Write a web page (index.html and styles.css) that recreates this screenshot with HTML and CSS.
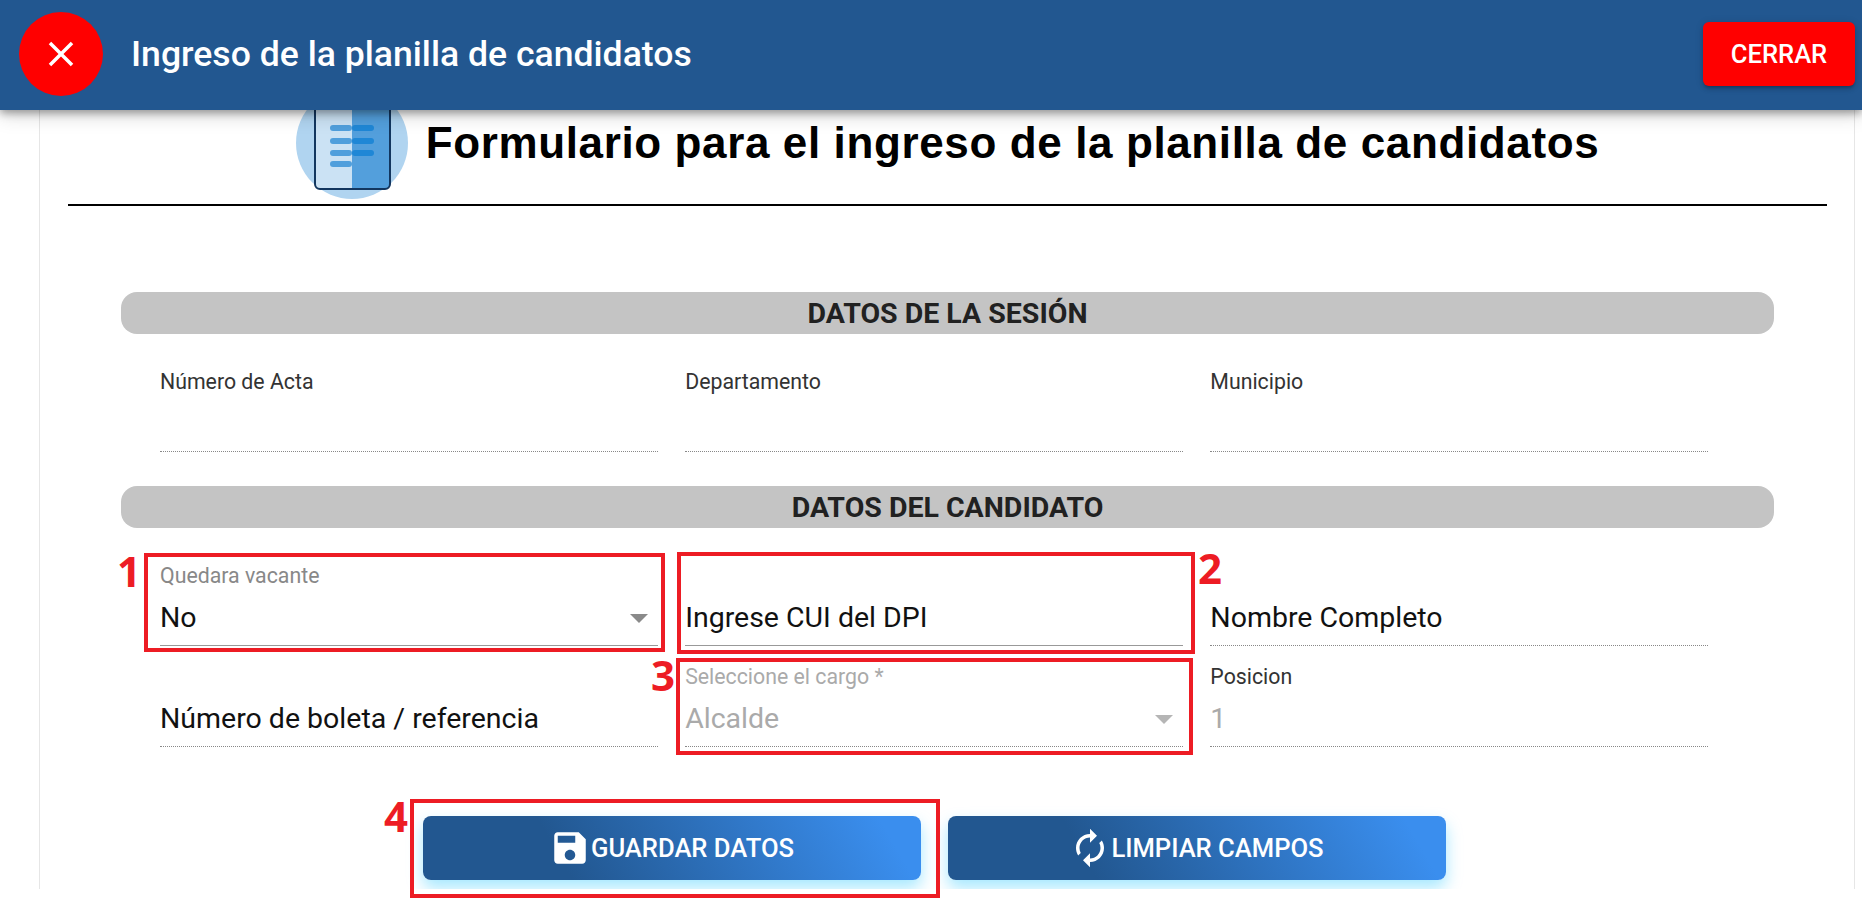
FILE: index.html
```html
<!DOCTYPE html>
<html lang="es">
<head>
    <meta charset="UTF-8">
    <meta name="viewport" content="width=device-width, initial-scale=1.0">
    <title>Ingreso de la planilla de candidatos</title>
    <link rel="stylesheet" href="styles.css">
</head>
<body>
    <header class="top-bar">
        <button class="close-round">
            <svg class="icon-42" viewBox="0 0 24 24"><path d="M19 6.41L17.59 5 12 10.59 6.41 5 5 6.41 10.59 12 5 17.59 6.41 19 12 13.41 17.59 19 19 17.59 13.41 12z"/></svg>
        </button>
        <div class="top-title">Ingreso de la planilla de candidatos</div>
        <button class="close-btn">CERRAR</button>
    </header>

    <div class="dialog-body">
        <div class="sheet">
            <div class="form-title">
                <svg class="form-icon" viewBox="0 0 112 112">
                    <circle cx="56" cy="56" r="56" fill="#b0d4f0"/>
                    <path d="M19 -10H56V102H24a5 5 0 0 1-5-5z" fill="#cbe2f4"/>
                    <path d="M56 -10H94V97a5 5 0 0 1-5 5H56z" fill="#539fdc"/>
                    <path d="M19 -10V97a5 5 0 0 0 5 5H89a5 5 0 0 0 5-5V-10" fill="none" stroke="#12365f" stroke-width="2"/>
                    <g fill="#509fdc">
                        <rect x="34" y="38" width="22" height="6" rx="3"/>
                        <rect x="34" y="51" width="22" height="6" rx="3"/>
                        <rect x="34" y="63" width="22" height="6" rx="3"/>
                        <rect x="34" y="74" width="22" height="6" rx="3"/>
                    </g>
                    <g fill="#1f87d6">
                        <rect x="56" y="38" width="22" height="6" rx="3"/>
                        <rect x="56" y="51" width="22" height="6" rx="3"/>
                        <rect x="56" y="63" width="22" height="6" rx="3"/>
                    </g>
                </svg>
                <h1>Formulario para el ingreso de la planilla de candidatos</h1>
            </div>

            <div class="section-bar first">DATOS DE LA SESIÓN</div>
            <div class="field-grid">
                <div class="field dotted">
                    <label>Número de Acta</label>
                    <div class="field-value"></div>
                </div>
                <div class="field dotted">
                    <label>Departamento</label>
                    <div class="field-value"></div>
                </div>
                <div class="field dotted">
                    <label>Municipio</label>
                    <div class="field-value"></div>
                </div>
            </div>

            <div class="section-bar">DATOS DEL CANDIDATO</div>
            <div class="field-grid">
                <div class="field">
                    <label class="muted">Quedara vacante</label>
                    <div class="field-value">No<span class="arrow"></span></div>
                </div>
                <div class="field">
                    <label></label>
                    <div class="field-value">Ingrese CUI del DPI</div>
                </div>
                <div class="field dotted">
                    <label></label>
                    <div class="field-value">Nombre Completo</div>
                </div>
                <div class="field dotted">
                    <label></label>
                    <div class="field-value">Número de boleta / referencia</div>
                </div>
                <div class="field dotted disabled">
                    <label>Seleccione el cargo *</label>
                    <div class="field-value">Alcalde<span class="arrow"></span></div>
                </div>
                <div class="field dotted">
                    <label>Posicion</label>
                    <div class="field-value off">1</div>
                </div>
            </div>

            <div class="actions">
                <button class="grad-btn">
                    <svg class="icon-42" viewBox="0 0 24 24"><path d="M17 3H5c-1.11 0-2 .9-2 2v14c0 1.1.89 2 2 2h14c1.1 0 2-.9 2-2V7l-4-4zm-5 16c-1.66 0-3-1.34-3-3s1.34-3 3-3 3 1.34 3 3-1.34 3-3 3zm3-10H5V5h10v4z"/></svg>
                    GUARDAR DATOS
                </button>
                <button class="grad-btn">
                    <svg class="icon-42" viewBox="0 0 24 24"><path d="M12 6v3l4-4-4-4v3c-4.42 0-8 3.58-8 8 0 1.57.46 3.03 1.24 4.26L6.7 14.8c-.45-.83-.7-1.79-.7-2.8 0-3.31 2.69-6 6-6zm6.76 1.74L17.3 9.2c.44.84.7 1.79.7 2.8 0 3.31-2.69 6-6 6v-3l-4 4 4 4v-3c4.42 0 8-3.58 8-8 0-1.57-.46-3.03-1.24-4.26z"/></svg>
                    LIMPIAR CAMPOS
                </button>
            </div>
        </div>
    </div>

    <!-- annotations drawn on top of the screenshot -->
    <div class="mark box-1"></div>
    <div class="mark box-2"></div>
    <div class="mark box-3"></div>
    <div class="mark box-4"></div>
    <div class="mark-num num-1">1</div>
    <div class="mark-num num-2">2</div>
    <div class="mark-num num-3">3</div>
    <div class="mark-num num-4">4</div>
</body>
</html>
```

FILE: styles.css
```css
body {
    margin: 0;
    height: 912px;
    overflow: hidden;
    position: relative;
    background: #fff;
    font-family: Roboto, sans-serif;
}
button {
    font-family: Roboto, sans-serif;
    border: none;
    cursor: pointer;
}
.icon-42 {
    width: 42px;
    height: 42px;
    flex: none;
    fill: #fff;
}
.top-bar {
    height: 110px;
    box-sizing: border-box;
    padding-bottom: 2px;
    background: #225790;
    display: flex;
    align-items: center;
    position: relative;
    z-index: 2;
    box-shadow: 0 3px 8px rgba(0,0,0,0.35), 0 6px 18px rgba(0,0,0,0.15);
}
.close-round {
    width: 84px;
    height: 84px;
    margin-left: 19px;
    border-radius: 50%;
    background: #f00;
    display: flex;
    align-items: center;
    justify-content: center;
    padding: 0;
}
.top-title {
    margin-left: 28px;
    color: #fff;
    font-size: 35.6px;
    font-weight: 500;
    flex: 1;
}
.close-btn {
    width: 152px;
    height: 64px;
    margin-right: 7px;
    background: #f00;
    color: #fff;
    font-size: 25.6px;
    font-weight: 500;
    border-radius: 6px;
    box-shadow: 0 3px 3px -2px rgba(0,0,0,0.2), 0 3px 4px rgba(0,0,0,0.14), 0 1px 8px rgba(0,0,0,0.12);
}
.dialog-body {
    height: 779px;
    overflow: hidden;
}
.sheet {
    margin: -24px 7px 0 39px;
    padding: 0 27px 0 28px;
    height: 900px;
    border-left: 1px solid #e6e6e6;
    border-right: 1px solid #e6e6e6;
}
.form-title {
    height: 114px;
    padding-bottom: 4px;
    display: flex;
    align-items: center;
    justify-content: center;
    gap: 18px;
    border-bottom: 2px solid #000;
}
.form-title h1 {
    margin: 0;
    font-family: "Liberation Sans", Arial, sans-serif;
    font-size: 44px;
    font-weight: bold;
    letter-spacing: 0.62px;
    color: #000;
}
.form-icon {
    width: 112px;
    height: 112px;
    overflow: hidden;
    flex: none;
}
.section-bar {
    height: 42px;
    line-height: 44px;
    margin: 34px 53px 0 53px;
    background: #c4c4c4;
    border-radius: 16px;
    text-align: center;
    font-size: 28.5px;
    font-weight: bold;
    color: #212121;
}
.section-bar.first {
    margin-top: 86px;
}
.field-grid {
    display: grid;
    grid-template-columns: repeat(3, 1fr);
    column-gap: 27.5px;
    margin: 17px 119px 0 92px;
}
.field {
    height: 101px;
    box-sizing: border-box;
    padding-top: 19px;
    border-bottom: 1px solid #999;
}
.field.dotted {
    border-bottom: 1px dotted #888;
}
.field label {
    display: block;
    height: 24px;
    line-height: 24px;
    font-size: 21.3px;
    color: #333;
}
.field label.muted {
    color: #888;
}
.field-value {
    height: 34px;
    line-height: 34px;
    margin-top: 13px;
    font-size: 28.5px;
    color: #111;
    display: flex;
    justify-content: space-between;
    align-items: center;
}
.field-value.off,
.field.disabled .field-value,
.field.disabled label {
    color: #aaa;
}
.arrow {
    width: 0;
    height: 0;
    margin-right: 10px;
    border-left: 9px solid transparent;
    border-right: 9px solid transparent;
    border-top: 9px solid #8a8a8a;
}
.field.disabled .arrow {
    border-top-color: #b5b5b5;
}
.actions {
    display: flex;
    justify-content: center;
    gap: 27px;
    margin: 69px 119px 0 92px;
}
.grad-btn {
    width: 498px;
    height: 64px;
    border-radius: 8px;
    background: linear-gradient(60deg, #225790 28%, #3a8eee 92%);
    color: #fff;
    font-size: 25.6px;
    font-weight: 500;
    display: flex;
    align-items: center;
    justify-content: center;
    box-shadow: 0 8px 16px rgba(0,188,255,0.35);
}

/* red annotation boxes */
.mark {
    position: absolute;
    box-sizing: border-box;
    border: 4.5px solid #ed1c24;
    z-index: 3;
}
.box-1 { left: 144px; top: 553px; width: 521px; height: 99px; }
.box-2 { left: 677px; top: 552px; width: 518px; height: 102px; }
.box-3 { left: 676px; top: 658px; width: 517px; height: 97px; }
.box-4 { left: 410px; top: 799px; width: 530px; height: 99px; }
.mark-num {
    position: absolute;
    z-index: 3;
    font-family: "Open Sans", sans-serif;
    font-size: 42px;
    font-weight: bold;
    line-height: 44px;
    color: #ed1c24;
}
.num-1 { left: 117px; top: 549px; }
.num-2 { left: 1198px; top: 546px; }
.num-3 { left: 651px; top: 653px; }
.num-4 { left: 384px; top: 794px; }
```
